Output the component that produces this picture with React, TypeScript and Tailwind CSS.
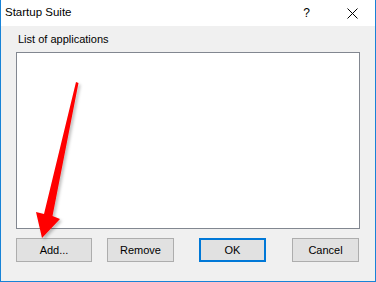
export default function App() {
  const font = { fontFamily: '"Liberation Sans", Arial, sans-serif' }

  return (
    <div
      className="relative w-[376px] h-[282px] flex flex-col border-x border-b border-[#1883d7] bg-[#f0f0f0] text-black overflow-hidden"
      style={font}
    >
      {/* title bar */}
      <div className="h-[26px] bg-white flex items-center shrink-0">
        <span className="ml-[4px] text-[11.5px] leading-none">Startup Suite</span>
        <span className="ml-auto text-[12px] leading-none mr-[37px]">?</span>
        <svg width="11" height="11" viewBox="0 0 11 11" className="mr-[17px]">
          <path d="M0.5 0.5 L10.5 10.5 M10.5 0.5 L0.5 10.5" stroke="#000" strokeWidth="1" />
        </svg>
      </div>

      {/* body */}
      <div className="flex-1 flex flex-col px-[15px]">
        <div className="mt-[6px] ml-[2px] text-[11px] leading-[14px]">List of applications</div>
        <div className="mt-[6px] h-[177px] w-[344px] bg-white border border-[#828790]" />

        <div className="mt-[9px] flex text-[11px]">
          <button className="w-[76px] h-[24px] bg-[#e1e1e1] border border-[#adadad]">Add...</button>
          <button className="ml-[15px] w-[67px] h-[24px] bg-[#e1e1e1] border border-[#adadad]">Remove</button>
          <button className="ml-[25px] w-[67px] h-[24px] bg-[#e1e1e1] border-2 border-[#0078d7]">OK</button>
          <button className="ml-[26px] w-[67px] h-[24px] bg-[#e1e1e1] border border-[#adadad]">Cancel</button>
        </div>
      </div>

      {/* red arrow annotation */}
      <svg className="absolute left-0 top-0 pointer-events-none" width="376" height="282" viewBox="0 0 376 282">
        <defs>
          <filter id="sh" x="-50%" y="-50%" width="200%" height="200%">
            <feDropShadow dx="2" dy="2" stdDeviation="1.5" floodColor="#000" floodOpacity="0.25" />
          </filter>
        </defs>
        <polygon
          points="75,82 77.5,83 51.5,216 59,219 41,238 35,212 43,214"
          fill="#ff0000"
          filter="url(#sh)"
        />
      </svg>
    </div>
  )
}
